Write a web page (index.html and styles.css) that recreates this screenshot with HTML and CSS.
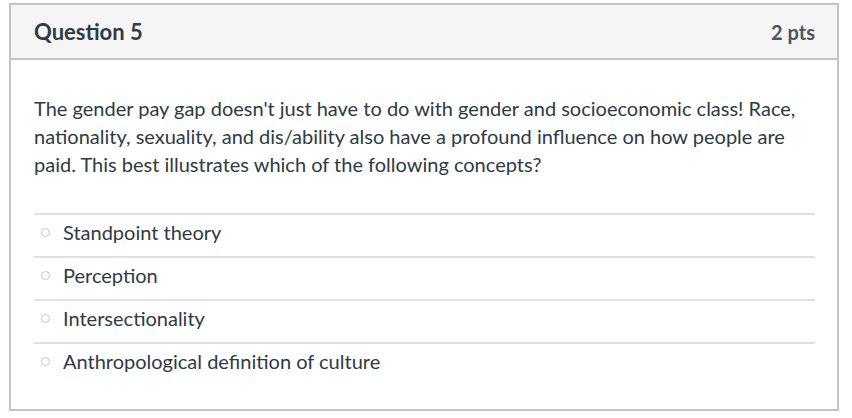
FILE: index.html
```html
<!DOCTYPE html>
<html>
<head>
<meta charset="utf-8">
<link rel="stylesheet" href="styles.css">
</head>
<body>
<div class="question">
  <div class="header">
    <span class="title">Question 5</span>
    <span class="pts">2 pts</span>
  </div>
  <div class="content">
    <p class="text">The gender pay gap doesn't just have to do with gender and socioeconomic class! Race, nationality, sexuality, and dis/ability also have a profound influence on how people are paid. This best illustrates which of the following concepts?</p>
    <div class="answers">
      <div class="answer"><div class="line"><span class="radio"></span><span class="label">Standpoint theory</span></div></div>
      <div class="answer"><div class="line"><span class="radio"></span><span class="label">Perception</span></div></div>
      <div class="answer"><div class="line"><span class="radio"></span><span class="label">Intersectionality</span></div></div>
      <div class="answer"><div class="line"><span class="radio"></span><span class="label">Anthropological definition of culture</span></div></div>
    </div>
  </div>
</div>
</body>
</html>
```
FILE: styles.css
```css
html, body {
  margin: 0;
  padding: 0;
  background: #fff;
}
body {
  padding: 3px 13px 0 9px;
  font-family: Lato, "Liberation Sans", sans-serif;
  color: #2d3b45;
}
.question {
  border: 2px solid #c4c4c4;
  height: 408px;
  box-sizing: border-box;
}
.header {
  background: #f5f5f5;
  border-bottom: 2px solid #c4c4c4;
  height: 55px;
  box-sizing: border-box;
  display: flex;
  justify-content: space-between;
  align-items: center;
  padding: 0 22px 0 23px;
}
.title {
  font-weight: bold;
  font-size: 22px;
}
.pts {
  font-weight: bold;
  font-size: 20px;
  color: #4a5660;
}
.content {
  padding: 34px 22px 0 23px;
}
.text {
  margin: 0 0 35px 0;
  font-size: 20px;
  line-height: 28px;
}
.answers {
  display: flex;
  flex-direction: column;
}
.answer {
  border-top: 2px solid #e0e0e0;
  height: 43px;
  box-sizing: border-box;
  padding: 5px 0 0 7px;
  font-size: 20px;
}
.line {
  display: flex;
  align-items: center;
  height: 24px;
  line-height: 24px;
}
.radio {
  width: 7px;
  height: 7px;
  border: 1px solid #c8c8c8;
  border-radius: 50%;
  margin-left: 0;
  margin-right: 13px;
  flex: none;
}
```
